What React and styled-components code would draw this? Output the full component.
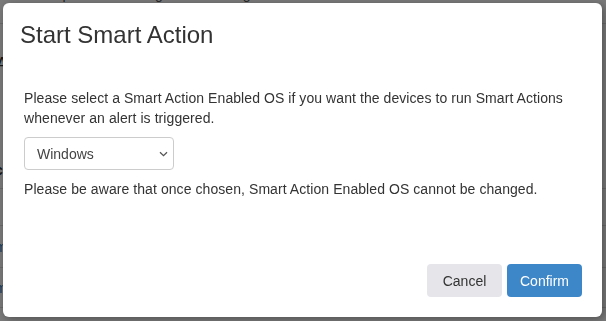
import React, { useState } from 'react';
import styled, { createGlobalStyle } from 'styled-components';

const GlobalStyle = createGlobalStyle`
  html, body {
    margin: 0;
    padding: 0;
    overflow: hidden;
  }
  body {
    font-family: 'Liberation Sans', Arial, sans-serif;
    font-size: 14px;
    color: #333;
    background: #fff;
  }
`;

// the app page that sits behind the modal backdrop
const UnderPage = styled.div`
  height: 100vh;
  overflow: hidden;
  background: #fff;
`;

const TabBar = styled.div`
  display: flex;
  margin-top: -24px;
  height: 48px;
  padding-left: 14px;
  border-bottom: 1px solid #ddd;
  box-sizing: border-box;
`;

const Tab = styled.div`
  padding: 8px 19px 0;
  line-height: 20px;
  color: #555;
`;

const SectionTitle = styled.div`
  margin: 30px 0 0 -4px;
  font-size: 18px;
  line-height: 20px;
  color: #333;
`;

const Table = styled.div`
  margin-top: 78px;
`;

const Row = styled.div`
  height: ${p => p.h}px;
  border-bottom: 1px solid #ddd;
  box-sizing: border-box;
  display: flex;
  align-items: center;
  font-weight: ${p => (p.bold ? 700 : 400)};
  color: ${p => (p.link ? '#337ab7' : '#333')};
  text-indent: -5px;
`;

const Backdrop = styled.div`
  position: fixed;
  inset: 0;
  background: rgba(0, 0, 0, 0.52);
  display: flex;
  padding: 3px 4px 4px 3px;
  box-sizing: border-box;
`;

const Modal = styled.div`
  flex: 1;
  display: flex;
  flex-direction: column;
  background: #fff;
  border-radius: 6px;
  box-shadow: 2px 2px 8px rgba(0, 0, 0, 0.35);
`;

const Header = styled.div`
  padding: 19px 17px 0;
`;

const Title = styled.h4`
  margin: 0;
  font-size: 24px;
  line-height: 26px;
  font-weight: 400;
  color: #333;
`;

const Body = styled.div`
  padding: 40px 21px 0;
`;

const Text = styled.p`
  margin: 0;
  margin-top: ${p => p.mt || 0}px;
  line-height: 20px;
  letter-spacing: 0.07px;
  color: #333;
`;

const SelectWrap = styled.div`
  position: relative;
  width: 150px;
  margin-top: 9px;
`;

const Select = styled.select`
  appearance: none;
  -webkit-appearance: none;
  display: block;
  width: 150px;
  height: 33px;
  padding: 0 24px 0 12px;
  border: 1px solid #ccc;
  border-radius: 4px;
  background: #fff;
  font-family: 'Liberation Sans', Arial, sans-serif;
  font-size: 14px;
  color: #444;
  outline: none;
`;

const Chevron = styled.svg`
  position: absolute;
  right: 6px;
  top: 14px;
  pointer-events: none;
`;

const Footer = styled.div`
  margin-top: auto;
  display: flex;
  justify-content: flex-end;
  gap: 5px;
  padding: 0 20px 20px;
`;

const Button = styled.button`
  width: 75px;
  height: 33px;
  border: none;
  border-radius: 4px;
  font-family: 'Liberation Sans', Arial, sans-serif;
  font-size: 14px;
  cursor: pointer;
  background: ${p => (p.primary ? '#3d87c9' : '#e6e6ea')};
  color: ${p => (p.primary ? '#fff' : '#333')};
`;

function App() {
  const [os, setOs] = useState('Windows');

  return (
    <>
      <GlobalStyle />
      <UnderPage>
        <TabBar>
          <Tab>Computers</Tab>
          <Tab>Logs</Tab>
          <Tab>Management</Tab>
          <Tab>SOC</Tab>
        </TabBar>
        <SectionTitle>A</SectionTitle>
        <Table>
          <Row h={37} bold>c</Row>
          <Row h={37} link>r</Row>
          <Row h={42} link>m</Row>
          <Row h={40} link>m</Row>
        </Table>
      </UnderPage>
      <Backdrop>
        <Modal>
          <Header>
            <Title>Start Smart Action</Title>
          </Header>
          <Body>
            <Text>
              Please select a Smart Action Enabled OS if you want the devices to run Smart Actions
              whenever an alert is triggered.
            </Text>
            <SelectWrap>
              <Select value={os} onChange={e => setOs(e.target.value)}>
                <option>Windows</option>
                <option>macOS</option>
                <option>Linux</option>
              </Select>
              <Chevron width="9" height="6" viewBox="0 0 9 6">
                <path d="M1 1.2 L4.5 4.6 L8 1.2" fill="none" stroke="#555" strokeWidth="1.3" />
              </Chevron>
            </SelectWrap>
            <Text mt={9}>
              Please be aware that once chosen, Smart Action Enabled OS cannot be changed.
            </Text>
          </Body>
          <Footer>
            <Button>Cancel</Button>
            <Button primary>Confirm</Button>
          </Footer>
        </Modal>
      </Backdrop>
    </>
  );
}

export default App;
